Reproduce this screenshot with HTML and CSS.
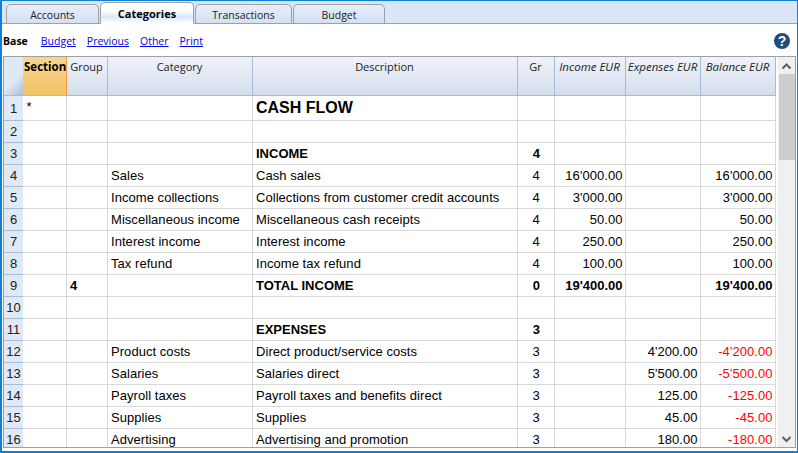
FILE: index.html
```html
<!DOCTYPE html>
<html lang="en">
<head>
    <meta charset="UTF-8">
    <title>Categories</title>
    <link rel="stylesheet" href="styles.css">
</head>
<body>
    <div class="window">
        <div class="tabbar">
            <div class="tab">Accounts</div>
            <div class="tab active">Categories</div>
            <div class="tab">Transactions</div>
            <div class="tab">Budget</div>
        </div>
        <div class="toolbar">
            <b class="view">Base</b>
            <a href="#">Budget</a>
            <a href="#">Previous</a>
            <a href="#">Other</a>
            <a href="#">Print</a>
            <svg class="help" width="16" height="16" viewBox="0 0 16 16">
                <circle cx="8" cy="8" r="8" fill="#1f4e79"/>
                <text x="8" y="13" text-anchor="middle" class="help-mark">?</text>
            </svg>
        </div>
        <div class="sheet">
            <table class="grid">
                <colgroup>
                    <col class="c-num"><col class="c-sec"><col class="c-grp"><col class="c-cat"><col class="c-desc"><col class="c-gr"><col class="c-inc"><col class="c-exp"><col class="c-bal">
                </colgroup>
                <thead>
                    <tr>
                        <th class="corner"></th>
                        <th class="current">Section</th>
                        <th>Group</th>
                        <th>Category</th>
                        <th>Description</th>
                        <th>Gr</th>
                        <th class="amt">Income EUR</th>
                        <th class="amt">Expenses EUR</th>
                        <th class="amt">Balance EUR</th>
                    </tr>
                </thead>
                <tbody>
                    <tr class="first"><td class="num">1</td><td class="star">*</td><td></td><td></td><td class="title">CASH FLOW</td><td></td><td></td><td></td><td></td></tr>
                    <tr><td class="num">2</td><td></td><td></td><td></td><td></td><td></td><td></td><td></td><td></td></tr>
                    <tr class="bold"><td class="num">3</td><td></td><td></td><td></td><td>INCOME</td><td class="gr">4</td><td></td><td></td><td></td></tr>
                    <tr><td class="num">4</td><td></td><td></td><td>Sales</td><td>Cash sales</td><td class="gr">4</td><td class="r">16'000.00</td><td class="r"></td><td class="r">16'000.00</td></tr>
                    <tr><td class="num">5</td><td></td><td></td><td>Income collections</td><td>Collections from customer credit accounts</td><td class="gr">4</td><td class="r">3'000.00</td><td class="r"></td><td class="r">3'000.00</td></tr>
                    <tr><td class="num">6</td><td></td><td></td><td>Miscellaneous income</td><td>Miscellaneous cash receipts</td><td class="gr">4</td><td class="r">50.00</td><td class="r"></td><td class="r">50.00</td></tr>
                    <tr><td class="num">7</td><td></td><td></td><td>Interest income</td><td>Interest income</td><td class="gr">4</td><td class="r">250.00</td><td class="r"></td><td class="r">250.00</td></tr>
                    <tr><td class="num">8</td><td></td><td></td><td>Tax refund</td><td>Income tax refund</td><td class="gr">4</td><td class="r">100.00</td><td class="r"></td><td class="r">100.00</td></tr>
                    <tr class="bold"><td class="num">9</td><td></td><td>4</td><td></td><td>TOTAL INCOME</td><td class="gr">0</td><td class="r">19'400.00</td><td class="r"></td><td class="r">19'400.00</td></tr>
                    <tr><td class="num">10</td><td></td><td></td><td></td><td></td><td></td><td></td><td></td><td></td></tr>
                    <tr class="bold"><td class="num">11</td><td></td><td></td><td></td><td>EXPENSES</td><td class="gr">3</td><td></td><td></td><td></td></tr>
                    <tr><td class="num">12</td><td></td><td></td><td>Product costs</td><td>Direct product/service costs</td><td class="gr">3</td><td class="r"></td><td class="r">4'200.00</td><td class="r neg">-4'200.00</td></tr>
                    <tr><td class="num">13</td><td></td><td></td><td>Salaries</td><td>Salaries direct</td><td class="gr">3</td><td class="r"></td><td class="r">5'500.00</td><td class="r neg">-5'500.00</td></tr>
                    <tr><td class="num">14</td><td></td><td></td><td>Payroll taxes</td><td>Payroll taxes and benefits direct</td><td class="gr">3</td><td class="r"></td><td class="r">125.00</td><td class="r neg">-125.00</td></tr>
                    <tr><td class="num">15</td><td></td><td></td><td>Supplies</td><td>Supplies</td><td class="gr">3</td><td class="r"></td><td class="r">45.00</td><td class="r neg">-45.00</td></tr>
                    <tr><td class="num">16</td><td></td><td></td><td>Advertising</td><td>Advertising and promotion</td><td class="gr">3</td><td class="r"></td><td class="r">180.00</td><td class="r neg">-180.00</td></tr>
                </tbody>
            </table>
            <div class="scrollbar">
                <svg class="arrow" width="18" height="17" viewBox="0 0 18 17"><path d="M4.5 11.5 L8.5 7.5 L12.5 11.5" fill="none" stroke="#606060" stroke-width="2"/></svg>
                <div class="thumb"></div>
                <div class="track"></div>
                <svg class="arrow" width="18" height="17" viewBox="0 0 18 17"><path d="M4.5 7 L8.5 11 L12.5 7" fill="none" stroke="#606060" stroke-width="2"/></svg>
            </div>
        </div>
    </div>
</body>
</html>
```

FILE: styles.css
```css
html, body { margin: 0; padding: 0; background: #fff; overflow: hidden; }
body { font-family: 'Liberation Sans', Arial, sans-serif; font-size: 13px; color: #000; }
.window { width: 798px; height: 453px; box-sizing: border-box; border: 1px solid #0f7fd8; border-left-width: 2px; border-bottom-width: 2px; display: flex; flex-direction: column; overflow: hidden; }

.tabbar { height: 23px; flex: none; box-sizing: border-box; background: #dae6f8; border-bottom: 1px solid #a0a0a0; display: flex; align-items: flex-end; padding-left: 4px; font-family: 'Open Sans', 'Noto Sans', sans-serif; font-size: 10.5px; }
.tab { width: 93px; height: 20px; box-sizing: border-box; margin-right: 1px; margin-bottom: -1px; text-align: center; line-height: 20px; color: #222; background: linear-gradient(#e6eefb, #d3e0f4); border: 1px solid #a0a0a0; border-radius: 5px 5px 0 0; }
.tab:nth-child(3) { width: 97px; }
.tab:nth-child(4) { width: 92px; }
.tab.active { height: 22px; width: 94px; font-size: 11px; line-height: 22px; font-weight: 700; color: #000; background: linear-gradient(#fff 40%, #dbe6f8 70%, #fff); border-bottom: 1px solid #fff; }

.toolbar { height: 32px; flex: none; box-sizing: border-box; display: flex; align-items: center; padding: 1px 7px 0 1px; font-family: 'Open Sans', 'Noto Sans', sans-serif; font-size: 10.5px; }
.toolbar .view { margin-right: 13px; color: #000; }
.toolbar a { color: #0000ee; margin-right: 11px; }
.help { margin-left: auto; }
.help-mark { font-family: 'Liberation Sans', sans-serif; font-size: 14px; font-weight: 700; fill: #fff; }

.sheet { flex: 1; min-height: 0; display: flex; margin: 0 1px 3px 1px; border: 1px solid #a0a0a0; overflow: hidden; }
.grid { border-collapse: collapse; table-layout: fixed; width: 771px; flex: none; align-self: flex-start; }
.c-num { width: 19px; }
.c-sec { width: 43px; }
.c-grp { width: 41px; }
.c-cat { width: 145px; }
.c-desc { width: 265px; }
.c-gr { width: 37px; }
.c-inc { width: 71px; }
.c-exp { width: 75px; }
.c-bal { width: 75px; }

th { height: 36px; padding: 2px 0 0; vertical-align: top; font-family: 'Open Sans', 'Noto Sans', sans-serif; font-size: 11px; font-weight: 400; color: #222; text-align: center; white-space: nowrap; background: linear-gradient(#eff3fa, #d4deeb); border-right: 1px solid #a4bcd6; border-bottom: 1px solid #a4bcd6; line-height: 16px; overflow: hidden; }
th.corner { background: linear-gradient(135deg, #dfe8f5 60%, #a9bdd2); border-right: none; }
th.current { font-size: 11.5px; font-weight: 700; color: #000; background: linear-gradient(#f8d692, #f2c264); border-right-color: #f29a3a; text-align: left; padding-left: 1px; }
th.amt { font-size: 11.5px; font-style: italic; }

td { height: 21px; padding: 0 2px 0 3.5px; border-right: 1px solid #d9d9d9; border-bottom: 1px solid #d9d9d9; white-space: nowrap; overflow: hidden; letter-spacing: 0.05px; }
tr.first td { height: 24px; }
td.num { background: #e0e9f6; border-right: none; border-bottom-color: #a4bcd6; text-align: center; color: #222; padding: 0; letter-spacing: 0; }
tr.first td.star { vertical-align: top; height: 21px; padding-top: 3px; }
td.title { font-size: 16px; font-weight: 700; letter-spacing: 0; }
td.gr { text-align: center; }
td.r { text-align: right; }
td.neg { color: #ff0000; }
tr.bold td:not(.num) { font-weight: 700; letter-spacing: 0; }

.scrollbar { width: 18px; margin-left: 2px; background: #f0f0f0; display: flex; flex-direction: column; flex: none; }
.arrow { flex: none; }
.thumb { height: 86px; flex: none; margin: 0 1px; background: #cdcdcd; }
.track { flex: 1; }
```
